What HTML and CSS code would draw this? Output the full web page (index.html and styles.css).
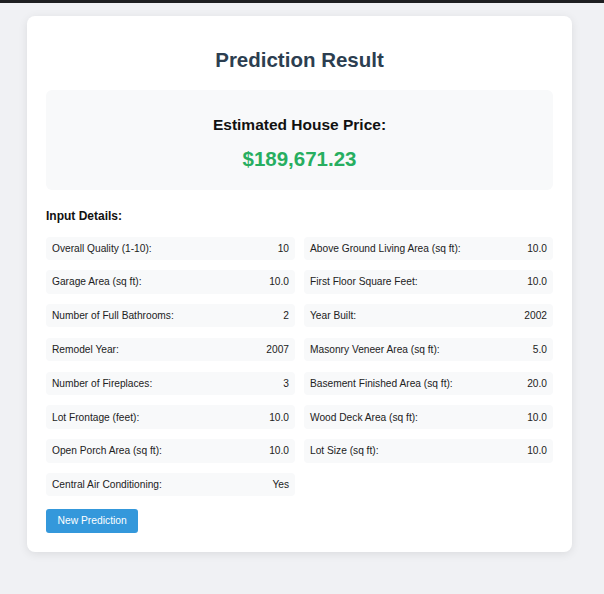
FILE: index.html
```html
<!DOCTYPE html>
<html lang="en">
<head>
<meta charset="utf-8">
<title>Prediction Result</title>
<link rel="stylesheet" href="styles.css">
</head>
<body>
<div class="topbar"></div>
<main class="page">
  <section class="card">
    <h1 class="title">Prediction Result</h1>
    <div class="result-box">
      <h2 class="result-label">Estimated House Price:</h2>
      <div class="price">$189,671.23</div>
    </div>
    <h3 class="section-title">Input Details:</h3>
    <div class="details">
      <div class="item"><span>Overall Quality (1-10):</span><span>10</span></div>
      <div class="item"><span>Above Ground Living Area (sq ft):</span><span>10.0</span></div>
      <div class="item"><span>Garage Area (sq ft):</span><span>10.0</span></div>
      <div class="item"><span>First Floor Square Feet:</span><span>10.0</span></div>
      <div class="item"><span>Number of Full Bathrooms:</span><span>2</span></div>
      <div class="item"><span>Year Built:</span><span>2002</span></div>
      <div class="item"><span>Remodel Year:</span><span>2007</span></div>
      <div class="item"><span>Masonry Veneer Area (sq ft):</span><span>5.0</span></div>
      <div class="item"><span>Number of Fireplaces:</span><span>3</span></div>
      <div class="item"><span>Basement Finished Area (sq ft):</span><span>20.0</span></div>
      <div class="item"><span>Lot Frontage (feet):</span><span>10.0</span></div>
      <div class="item"><span>Wood Deck Area (sq ft):</span><span>10.0</span></div>
      <div class="item"><span>Open Porch Area (sq ft):</span><span>10.0</span></div>
      <div class="item"><span>Lot Size (sq ft):</span><span>10.0</span></div>
      <div class="item"><span>Central Air Conditioning:</span><span>Yes</span></div>
    </div>
    <button class="btn" type="button">New Prediction</button>
  </section>
</main>
</body>
</html>
```
FILE: styles.css
```css
* { box-sizing: border-box; }
html, body { margin: 0; padding: 0; }
body {
  background: #f0f1f4;
  font-family: "Liberation Sans", Arial, Helvetica, sans-serif;
  color: #222;
}
.topbar {
  height: 3px;
  background: #1e1f21;
}
.page {
  padding: 13px 32px 40px 27px;
}
.card {
  background: #fff;
  border-radius: 8px;
  box-shadow: 0 2px 10px rgba(0, 0, 0, 0.09);
  padding: 31px 19px 19px 19px;
}
.title {
  margin: 0 0 18px;
  text-align: center;
  font-size: 20.5px;
  line-height: 25px;
  font-weight: bold;
  color: #2c3e50;
}
.result-box {
  background: #f8f9fa;
  border-radius: 6px;
  padding: 25px 20px 19px;
  text-align: center;
}
.result-label {
  margin: 0 0 11px;
  font-size: 15.5px;
  line-height: 20px;
  font-weight: bold;
  color: #111;
}
.price {
  font-size: 20.5px;
  line-height: 25px;
  font-weight: bold;
  color: #27ae60;
}
.section-title {
  margin: 19px 0 12.5px;
  font-size: 12px;
  line-height: 15px;
  font-weight: bold;
  color: #111;
}
.details {
  display: grid;
  grid-template-columns: 1fr 1fr;
  column-gap: 9px;
  row-gap: 10.4px;
}
.item {
  display: flex;
  justify-content: space-between;
  align-items: center;
  height: 23.4px;
  padding: 0 6px;
  background: #f8f9fa;
  border-radius: 4px;
  font-size: 10.2px;
  color: #222;
}
.btn {
  display: inline-block;
  margin-top: 12.5px;
  height: 24px;
  padding: 0 11.5px;
  border: none;
  border-radius: 3px;
  background: #3498db;
  color: #fff;
  font-family: inherit;
  font-size: 10.3px;
}
```
